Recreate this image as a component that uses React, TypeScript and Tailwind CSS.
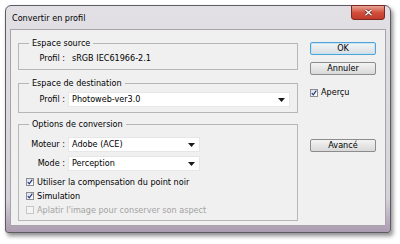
import React from "react";

const Arrow = () => (
  <svg width="7" height="4" viewBox="0 0 7 4">
    <path d="M0 0H7L3.5 4Z" fill="#1a1a1a" />
  </svg>
);

const Checkbox = ({ checked, disabled }: { checked?: boolean; disabled?: boolean }) => (
  <div
    className={
      disabled
        ? "w-[8px] h-[8px] border border-[#c6c6c6] bg-[#f4f4f4]"
        : "w-[8px] h-[8px] border border-[#8a8d92] bg-gradient-to-br from-[#dedfe2] to-white flex items-center justify-center"
    }
  >
    {checked && (
      <svg width="6" height="6" viewBox="0 0 6 6">
        <path d="M0.8 3.2L2.3 4.9L5.3 0.6" stroke="#24388c" strokeWidth="1.2" fill="none" />
      </svg>
    )}
  </div>
);

const Select = ({ value, width }: { value: string; width: string }) => (
  <div className={`${width} h-[15px] bg-white border border-[#e6e6e6] flex items-center justify-between pl-[3px] pr-[4px]`}>
    <span>{value}</span>
    <Arrow />
  </div>
);

const Button = ({ label, focused }: { label: string; focused?: boolean }) => (
  <div
    className={
      focused
        ? "w-[66px] h-[13px] rounded-[2px] border border-[#4fa3d6] bg-gradient-to-b from-[#f4f7f9] to-[#d7dde2] shadow-[inset_0_0_0_1px_#c5e3f3] flex items-center justify-center"
        : "w-[66px] h-[13px] rounded-[2px] border border-[#8c8c8c] bg-gradient-to-b from-[#f3f3f3] to-[#d9d9d9] flex items-center justify-center"
    }
  >
    {label}
  </div>
);

const Row = ({ label, children }: { label: string; children: React.ReactNode }) => (
  <div className="flex items-center">
    <div className="w-[46px] text-right">{label}</div>
    <div className="ml-[3px]">{children}</div>
  </div>
);

export default function App() {
  return (
    <div className="w-[400px] h-[244px] bg-white pl-[5px] pt-[5px] text-[9px] leading-[11px] text-black font-['DejaVu_Sans_Condensed','Liberation_Sans',sans-serif]">
      <div className="relative w-[386px] h-[228px] rounded-t-[6px] rounded-b-[3px] border border-[#5e5c63] bg-gradient-to-b from-[#e2e0e5] via-[#d6d2d9] via-85% to-[#ab9bb0] shadow-[2px_3px_4px_rgba(0,0,0,0.45)] flex flex-col">
        {/* title bar */}
        <div className="h-[23px] flex items-center pl-[6px] pt-[2px]">Convertir en profil</div>
        <div className="absolute top-[-1px] right-[5px] w-[34px] h-[15px] rounded-b-[3px] border border-[#7a2a22] bg-gradient-to-b from-[#e8a194] via-[#d2503b] to-[#c33a2a] flex items-center justify-center">
          <svg width="9" height="7" viewBox="0 0 9 7">
            <path d="M1.5 0.8L7.5 6.2M7.5 0.8L1.5 6.2" stroke="#5a1a14" strokeWidth="2.6" />
            <path d="M1.5 0.8L7.5 6.2M7.5 0.8L1.5 6.2" stroke="#ffffff" strokeWidth="1.5" />
          </svg>
        </div>

        {/* client area */}
        <div className="mx-[4px] h-[197px] border border-[#a7a3ab] bg-[#f0f0f0] flex pl-[7px] pt-[8px]">
          <div className="w-[280px] flex flex-col">
            <fieldset className="border border-[#b6b6b6] pb-[5px]">
              <legend className="ml-[10px] px-[3px]">Espace source</legend>
              <div className="mt-[4px]">
                <Row label="Profil :">
                  <span className="pl-[4px]">sRGB IEC61966-2.1</span>
                </Row>
              </div>
            </fieldset>

            <fieldset className="mt-[8px] border border-[#b6b6b6] pb-[5px]">
              <legend className="ml-[10px] px-[3px]">Espace de destination</legend>
              <div className="mt-[3px]">
                <Row label="Profil :">
                  <Select value="Photoweb-ver3.0" width="w-[222px]" />
                </Row>
              </div>
            </fieldset>

            <fieldset className="mt-[6px] border border-[#b6b6b6] pb-[3px]">
              <legend className="ml-[10px] px-[3px]">Options de conversion</legend>
              <div className="mt-[7px] flex flex-col gap-[4px]">
                <Row label="Moteur :">
                  <Select value="Adobe (ACE)" width="w-[132px]" />
                </Row>
                <Row label="Mode :">
                  <Select value="Perception" width="w-[132px]" />
                </Row>
              </div>
              <div className="mt-[4px] pl-[7px] flex flex-col">
                <div className="h-[14px] flex items-center gap-[3px]">
                  <Checkbox checked />
                  <span>Utiliser la compensation du point noir</span>
                </div>
                <div className="h-[14px] flex items-center gap-[3px]">
                  <Checkbox checked />
                  <span>Simulation</span>
                </div>
                <div className="h-[14px] flex items-center gap-[3px] text-[#a3a3a3]">
                  <Checkbox disabled />
                  <span>Aplatir l'image pour conserver son aspect</span>
                </div>
              </div>
            </fieldset>
          </div>

          {/* buttons */}
          <div className="ml-[12px] pt-[4px] flex flex-col">
            <Button label="OK" focused />
            <div className="mt-[7px]">
              <Button label="Annuler" />
            </div>
            <div className="mt-[11px] h-[13px] flex items-center gap-[3px]">
              <Checkbox checked />
              <span>Aperçu</span>
            </div>
            <div className="mt-[40px]">
              <Button label="Avancé" />
            </div>
          </div>
        </div>
      </div>
    </div>
  );
}
